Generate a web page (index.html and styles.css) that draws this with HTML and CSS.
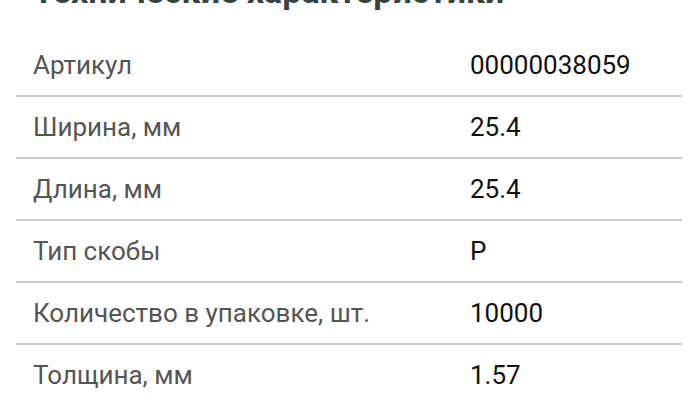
FILE: index.html
```html
<!DOCTYPE html>
<html lang="ru">
<head>
<meta charset="utf-8">
<link rel="stylesheet" href="styles.css">
</head>
<body>
<div class="page">
  <h2 class="title">Технические характеристики</h2>
  <div class="specs">
    <div class="row"><div class="label">Артикул</div><div class="value">00000038059</div></div>
    <div class="row"><div class="label">Ширина, мм</div><div class="value">25.4</div></div>
    <div class="row"><div class="label">Длина, мм</div><div class="value">25.4</div></div>
    <div class="row"><div class="label">Тип скобы</div><div class="value">P</div></div>
    <div class="row"><div class="label">Количество в упаковке, шт.</div><div class="value">10000</div></div>
    <div class="row"><div class="label">Толщина, мм</div><div class="value">1.57</div></div>
  </div>
</div>
</body>
</html>
```

FILE: styles.css
```css
html, body {
  margin: 0;
  padding: 0;
  background: #fff;
}
body {
  font-family: Roboto, "Noto Sans", sans-serif;
  overflow: hidden;
}
.page {
  padding: 0 14px 0 16px;
}
.title {
  margin: -27px 0 26px 17px;
  font-size: 34px;
  line-height: 36px;
  font-weight: 700;
  color: #36433f;
  height: 36px;
}
.row {
  display: grid;
  grid-template-columns: 454px 1fr;
  height: 60px;
  align-items: center;
  border-bottom: 2px solid #cccccc;
  font-size: 26px;
}
.row:last-child {
  border-bottom: none;
}
.label {
  padding-left: 17px;
  color: #555555;
}
.value {
  color: #111111;
}
```
